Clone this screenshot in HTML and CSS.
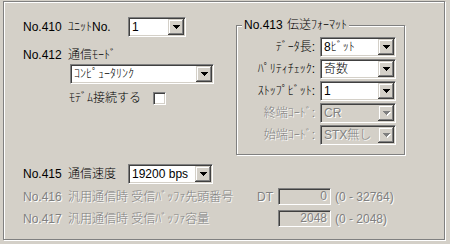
FILE: index.html
```html
<!DOCTYPE html>
<html lang="ja">
<head>
    <meta charset="UTF-8">
    <title>通信設定</title>
    <link rel="stylesheet" href="styles.css">
</head>
<body>
    <div class="panel">
        <div class="top">
            <div class="left">
                <div class="row row-unit">
                    <span class="no">No.410</span>
                    <span class="name">ﾕﾆｯﾄNo.</span>
                    <div class="combo combo-unit">
                        <span class="val">1</span>
                        <span class="btn"><svg width="7" height="4" viewBox="0 0 7 4"><path d="M0 0h7v1H0zM1 1h5v1H1zM2 2h3v1H2zM3 3h1v1H3z"/></svg></span>
                    </div>
                </div>
                <div class="row row-mode">
                    <span class="no">No.412</span>
                    <span class="name">通信ﾓｰﾄﾞ</span>
                </div>
                <div class="combo combo-mode">
                    <span class="val">ｺﾝﾋﾟｭｰﾀﾘﾝｸ</span>
                    <span class="btn"><svg width="7" height="4" viewBox="0 0 7 4"><path d="M0 0h7v1H0zM1 1h5v1H1zM2 2h3v1H2zM3 3h1v1H3z"/></svg></span>
                </div>
                <div class="row row-modem">
                    <span class="modem-label">ﾓﾃﾞﾑ接続する</span>
                    <span class="check"></span>
                </div>
            </div>

            <div class="group">
                <span class="group-title"><span class="no-title">No.413</span>伝送ﾌｫｰﾏｯﾄ</span>
                <div class="fmt">
                    <span class="fmt-label">ﾃﾞｰﾀ長:</span>
                    <div class="combo">
                        <span class="val">8ﾋﾞｯﾄ</span>
                        <span class="btn"><svg width="7" height="4" viewBox="0 0 7 4"><path d="M0 0h7v1H0zM1 1h5v1H1zM2 2h3v1H2zM3 3h1v1H3z"/></svg></span>
                    </div>
                    <span class="fmt-label">ﾊﾟﾘﾃｨﾁｪｯｸ:</span>
                    <div class="combo">
                        <span class="val">奇数</span>
                        <span class="btn"><svg width="7" height="4" viewBox="0 0 7 4"><path d="M0 0h7v1H0zM1 1h5v1H1zM2 2h3v1H2zM3 3h1v1H3z"/></svg></span>
                    </div>
                    <span class="fmt-label">ｽﾄｯﾌﾟﾋﾞｯﾄ:</span>
                    <div class="combo">
                        <span class="val">1</span>
                        <span class="btn"><svg width="7" height="4" viewBox="0 0 7 4"><path d="M0 0h7v1H0zM1 1h5v1H1zM2 2h3v1H2zM3 3h1v1H3z"/></svg></span>
                    </div>
                    <span class="fmt-label disabled">終端ｺｰﾄﾞ:</span>
                    <div class="combo off">
                        <span class="val">CR</span>
                        <span class="btn"><svg width="7" height="4" viewBox="0 0 7 4"><path d="M0 0h7v1H0zM1 1h5v1H1zM2 2h3v1H2zM3 3h1v1H3z"/></svg></span>
                    </div>
                    <span class="fmt-label disabled">始端ｺｰﾄﾞ:</span>
                    <div class="combo off">
                        <span class="val">STX無し</span>
                        <span class="btn"><svg width="7" height="4" viewBox="0 0 7 4"><path d="M0 0h7v1H0zM1 1h5v1H1zM2 2h3v1H2zM3 3h1v1H3z"/></svg></span>
                    </div>
                </div>
            </div>
        </div>

        <div class="bottom">
            <div class="row row-speed">
                <span class="no">No.415</span>
                <span class="name">通信速度</span>
                <div class="combo combo-speed">
                    <span class="val">19200 bps</span>
                    <span class="btn"><svg width="7" height="4" viewBox="0 0 7 4"><path d="M0 0h7v1H0zM1 1h5v1H1zM2 2h3v1H2zM3 3h1v1H3z"/></svg></span>
                </div>
            </div>
            <div class="row row-buf disabled">
                <span class="no">No.416</span>
                <span class="buf-name">汎用通信時 受信ﾊﾞｯﾌｧ先頭番号</span>
                <span class="dt">DT</span>
                <span class="edit">0</span>
                <span class="range">(0 - 32764)</span>
            </div>
            <div class="row row-buf row-buf2 disabled">
                <span class="no">No.417</span>
                <span class="buf-name">汎用通信時 受信ﾊﾞｯﾌｧ容量</span>
                <span class="dt"></span>
                <span class="edit">2048</span>
                <span class="range">(0 - 2048)</span>
            </div>
        </div>
    </div>
</body>
</html>
```

FILE: styles.css
```css
body {
    margin: 0;
    width: 450px;
    height: 244px;
    overflow: hidden;
    background-color: #d4d0c8;
    color: #000;
    font-family: "Liberation Sans", "Noto Sans CJK JP Light", "Noto Sans CJK JP", sans-serif;
    font-size: 12px;
    line-height: 14px;
}

/* etched outer frame */
.panel {
    box-sizing: border-box;
    width: 442px;
    height: 239px;
    margin: 1px 0 0 3px;
    border: 1px solid #808080;
    box-shadow: inset 1px 1px #fff, 1px 1px #fff;
}
.top {
    display: flex;
}
.left {
    box-sizing: border-box;
    width: 232px;
    padding: 15px 0 0 19px;
}
.row {
    display: flex;
    align-items: center;
}
.no {
    width: 45px;
    flex: none;
    white-space: nowrap;
}
.name {
    width: 60px;
    flex: none;
    white-space: nowrap;
}
.row-unit {
    height: 20px;
}
.row-mode {
    margin-top: 11px;
}
.row-modem {
    margin: 7px 0 0 46px;
}
.modem-label {
    width: 84px;
}

/* combo box */
.combo {
    box-sizing: border-box;
    height: 20px;
    display: flex;
    align-items: stretch;
    background: #fff;
    border: 1px solid;
    border-color: #808080 #fff #fff #808080;
    box-shadow: inset 1px 1px #404040, inset -1px -1px #d4d0c8;
    padding: 1px;
}
.combo .val {
    flex: 1;
    padding-left: 2px;
    line-height: 16px;
    white-space: nowrap;
    overflow: hidden;
}
.combo .btn {
    width: 16px;
    flex: none;
    display: flex;
    align-items: center;
    justify-content: center;
    background: #d4d0c8;
    box-shadow: inset -1px -1px #404040, inset 1px 1px #d4d0c8, inset -2px -2px #808080, inset 2px 2px #fff;
}
.combo .btn svg {
    display: block;
    fill: #000;
}
.combo.off {
    background: #d4d0c8;
    color: #808080;
    text-shadow: 1px 1px #fff;
}
.combo.off .btn svg {
    fill: #808080;
    filter: drop-shadow(1px 1px 0 #fff);
}
.combo-unit {
    width: 58px;
}
.combo-mode {
    width: 144px;
    margin: 2px 0 0 47px;
}
.combo-speed {
    width: 85px;
}

.check {
    box-sizing: border-box;
    width: 13px;
    height: 13px;
    background: #fff;
    border: 1px solid;
    border-color: #808080 #fff #fff #808080;
    box-shadow: inset 1px 1px #404040, inset -1px -1px #d4d0c8;
}

/* group box */
.group {
    position: relative;
    box-sizing: border-box;
    width: 169px;
    height: 130px;
    margin-top: 23px;
    border: 1px solid #808080;
    box-shadow: inset 1px 1px #fff, 1px 1px #fff;
}
.group-title {
    position: absolute;
    top: -8px;
    left: 5px;
    padding: 0 2px;
    background: #d4d0c8;
    white-space: nowrap;
}
.no-title {
    display: inline-block;
    width: 43px;
}
.fmt {
    display: grid;
    grid-template-columns: 78px 76px;
    grid-auto-rows: 20px;
    column-gap: 5px;
    row-gap: 2px;
    padding-top: 11px;
}
.fmt-label {
    text-align: right;
    align-self: center;
    white-space: nowrap;
}
.disabled {
    color: #808080;
    text-shadow: 1px 1px #fff;
}

/* bottom rows */
.bottom {
    padding-left: 19px;
}
.row-speed {
    height: 20px;
    margin-top: 9px;
}
.row-buf {
    height: 17px;
    margin-top: 4px;
}
.row-buf2 {
    margin-top: 5px;
}
.buf-name {
    width: 189px;
    flex: none;
    white-space: nowrap;
}
.dt {
    width: 21px;
    flex: none;
}
.edit {
    box-sizing: border-box;
    width: 53px;
    height: 17px;
    flex: none;
    text-align: right;
    padding-right: 3px;
    line-height: 15px;
    border: 1px solid;
    border-color: #808080 #fff #fff #808080;
    box-shadow: inset 1px 1px #404040, inset -1px -1px #d4d0c8;
}
.range {
    margin-left: 4px;
    white-space: nowrap;
}
```
